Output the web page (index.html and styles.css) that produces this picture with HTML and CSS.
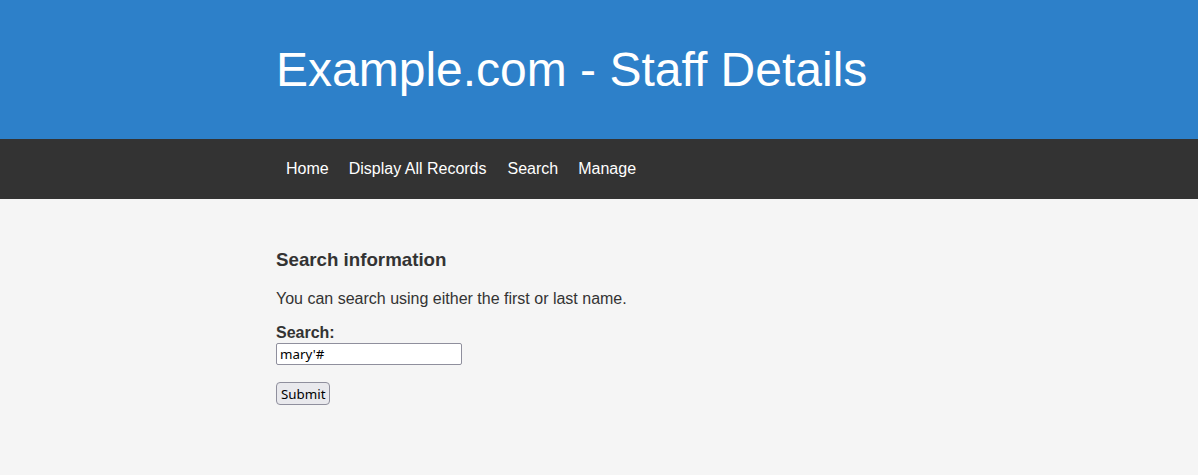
FILE: index.html
```html
<!DOCTYPE html>
<html lang="en">
<head>
<meta charset="utf-8">
<title>Example.com - Staff Details</title>
<link rel="stylesheet" href="styles.css">
</head>
<body>
<header class="site-header">
  <div class="container">
    <h1 class="site-title">Example.com - Staff Details</h1>
  </div>
</header>
<nav class="site-nav">
  <div class="container">
    <ul class="nav-list">
      <li><a href="#">Home</a></li>
      <li><a href="#">Display All Records</a></li>
      <li><a href="#">Search</a></li>
      <li><a href="#">Manage</a></li>
    </ul>
  </div>
</nav>
<main class="site-main">
  <div class="container">
    <h3 class="section-title">Search information</h3>
    <p class="intro">You can search using either the first or last name.</p>
    <form class="search-form">
      <label class="field-label" for="search">Search:</label>
      <input class="field-input" type="text" id="search" name="search" value="mary'#">
      <div class="form-actions">
        <input class="submit-btn" type="submit" value="Submit">
      </div>
    </form>
  </div>
</main>
</body>
</html>
```
FILE: styles.css
```css
html, body {
  margin: 0;
  padding: 0;
}
body {
  font-family: "Liberation Sans", Arial, sans-serif;
  color: #333;
  background: #f5f5f5;
  height: 475px;
}
.container {
  width: 646px;
  margin: 0 auto;
}
.site-header {
  background: #2d80c9;
  padding: 42px 0;
}
.site-title {
  margin: 0;
  font-size: 48px;
  font-weight: normal;
  line-height: 55px;
  color: #fff;
}
.site-nav {
  background: #333;
}
.nav-list {
  list-style: none;
  margin: 0;
  padding: 0;
  display: flex;
}
.nav-list a {
  display: block;
  padding: 0 10px;
  line-height: 60px;
  font-size: 16px;
  color: #fff;
  text-decoration: none;
}
.nav-list li:nth-child(2) a {
  padding-right: 11px;
}
.site-main {
  padding: 31px 0 30px;
}
.section-title {
  font-size: 18.72px;
  margin: 18.72px 0 19.72px;
}
.intro {
  font-size: 16px;
  margin: 16px 0;
}
.search-form {
  display: flex;
  flex-direction: column;
  align-items: flex-start;
}
.field-label {
  font-weight: bold;
  font-size: 16px;
  line-height: 18px;
}
.field-input {
  width: 186px;
  height: 22px;
  box-sizing: border-box;
  margin: 1px 0 0;
  padding: 1px 3px;
  font-family: "Noto Sans", "Open Sans", sans-serif;
  font-size: 13.33px;
  color: #000;
  background: #fff;
  border: 1px solid #8f8f9d;
  border-radius: 2px;
}
.form-actions {
  margin-top: 17px;
}
.submit-btn {
  margin: 0;
  width: 54px;
  height: 23px;
  box-sizing: border-box;
  padding: 0 4px;
  font-family: "Noto Sans", "Open Sans", sans-serif;
  font-size: 13.33px;
  color: #000;
  background: #e9e9ed;
  border: 1px solid #8f8f9d;
  border-radius: 4px;
}
```
